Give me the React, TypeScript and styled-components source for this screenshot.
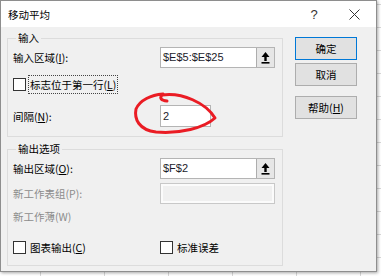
import React from "react";
import styled, { createGlobalStyle } from "styled-components";

const GlobalStyle = createGlobalStyle`
  html, body {
    margin: 0;
    padding: 0;
  }

  body {
    width: 381px;
    height: 276px;
    overflow: hidden;
    background-color: #fff;
    background-image: linear-gradient(#d8d8d8 1px, transparent 1px),
      linear-gradient(90deg, #d8d8d8 1px, transparent 1px);
    background-size: 100% 23px, 64px 100%;
    background-position: 0 4px, 40px 0;
    font-family: "Noto Sans CJK SC", "Microsoft YaHei", sans-serif;
    font-size: 10.5px;
    color: #000;
  }
`;

interface RowProps {
  $mt: number;
  $h: number;
}

interface GroupProps {
  $mt: number;
  $pb: number;
}

const App: React.FC = () => {
  return (
    <>
      <GlobalStyle />
      <Dialog>
        <TitleBar>
          <Title>移动平均</Title>
          <HelpMark>?</HelpMark>
          <CloseBox>
            <svg width="11" height="11" viewBox="0 0 11 11">
              <path d="M0.5 0.5 L10.5 10.5 M10.5 0.5 L0.5 10.5" stroke="#333" strokeWidth="1" fill="none" />
            </svg>
          </CloseBox>
        </TitleBar>

        <Body>
          <LeftCol>
            <GroupBox $mt={0} $pb={9}>
              <Legend>输入</Legend>
              <FieldRow $mt={2} $h={21}>
                <Label>
                  输入区域(<Mn>I</Mn>):
                </Label>
                <RefEdit>
                  <RefValue>$E$5:$E$25</RefValue>
                  <RefButton>
                    <UpArrow />
                  </RefButton>
                </RefEdit>
              </FieldRow>
              <FieldRow $mt={7} $h={19}>
                <CheckRow>
                  <Checkbox />
                  <FocusText>
                    标志位于第一行(<Mn>L</Mn>)
                  </FocusText>
                </CheckRow>
              </FieldRow>
              <FieldRow $mt={11} $h={22}>
                <Label>
                  间隔(<Mn>N</Mn>):
                </Label>
                <NumberBox>2</NumberBox>
              </FieldRow>
            </GroupBox>

            <GroupBox $mt={5} $pb={7}>
              <Legend>输出选项</Legend>
              <FieldRow $mt={2} $h={21}>
                <Label>
                  输出区域(<Mn>O</Mn>):
                </Label>
                <RefEdit>
                  <RefValue>$F$2</RefValue>
                  <RefButton>
                    <UpArrow />
                  </RefButton>
                </RefEdit>
              </FieldRow>
              <FieldRow $mt={4} $h={21}>
                <Label $disabled>新工作表组(P):</Label>
                <DisabledBox />
              </FieldRow>
              <FieldRow $mt={2} $h={21}>
                <Label $disabled>新工作薄(W)</Label>
              </FieldRow>
              <FieldRow $mt={10} $h={21}>
                <CheckRow>
                  <Checkbox />
                  <CheckText>
                    图表输出(<Mn>C</Mn>)
                  </CheckText>
                </CheckRow>
                <CheckRow>
                  <Checkbox />
                  <CheckText>标准误差</CheckText>
                </CheckRow>
              </FieldRow>
            </GroupBox>
          </LeftCol>

          <RightCol>
            <DialogButton $primary $mt={0}>
              确定
            </DialogButton>
            <DialogButton $mt={3}>取消</DialogButton>
            <DialogButton $mt={10}>
              帮助(<Mn>H</Mn>)
            </DialogButton>
          </RightCol>
        </Body>

        <Scribble viewBox="0 0 381 276" width="381" height="276">
          <path
            d="M167 101 Q158 100 162 95 C182 92 206 103 215 118 C204 128 180 134 156 132 C139 130 134 119 136 109 C140 100 151 95 163 94"
            stroke="#ea1c24"
            strokeWidth="3"
            fill="none"
            strokeLinecap="round"
            strokeLinejoin="round"
          />
        </Scribble>
      </Dialog>
    </>
  );
};

const UpArrow: React.FC = () => (
  <svg width="9" height="12" viewBox="0 0 9 12">
    <path d="M4.5 0 L8.5 5 H5.7 V9 H3.3 V5 H0.5 Z" fill="#000" />
    <rect x="0.5" y="10" width="8" height="1.6" fill="#000" />
  </svg>
);

const Dialog = styled.div`
  position: relative;
  width: 377px;
  box-sizing: border-box;
  border: 1px solid #8e8e8e;
  background: #f0f0f0;
  box-shadow: 1px 1px 3px rgba(0, 0, 0, 0.35);
`;

const TitleBar = styled.div`
  height: 26px;
  background: #fff;
  display: flex;
  align-items: center;
  padding-left: 7px;
`;

const Title = styled.span`
  font-size: 10.5px;
  color: #000;
`;

const HelpMark = styled.span`
  margin-left: auto;
  width: 36px;
  text-align: center;
  font-family: "Liberation Sans", sans-serif;
  font-size: 13px;
  color: #333;
`;

const CloseBox = styled.div`
  width: 44px;
  height: 26px;
  display: flex;
  align-items: center;
  justify-content: center;
`;

const Body = styled.div`
  display: flex;
  padding: 4px 0 5px 6px;
`;

const LeftCol = styled.div`
  width: 276px;
  display: flex;
  flex-direction: column;
`;

const RightCol = styled.div`
  margin-left: 12px;
  padding-top: 6px;
  display: flex;
  flex-direction: column;
`;

const GroupBox = styled.fieldset<GroupProps>`
  margin: ${(p) => p.$mt}px 0 0 0;
  padding: 0 7px ${(p) => p.$pb}px 5px;
  border: 1px solid #dcdcdc;
  min-width: 0;
`;

const Legend = styled.legend`
  padding: 0 2px;
  margin-left: 3px;
  line-height: 14px;
  font-size: 10.5px;
`;

const FieldRow = styled.div<RowProps>`
  display: grid;
  grid-template-columns: 1fr 115px;
  align-items: center;
  height: ${(p) => p.$h}px;
  margin-top: ${(p) => p.$mt}px;
`;

const Label = styled.span<{ $disabled?: boolean }>`
  white-space: nowrap;
  color: ${(p) => (p.$disabled ? "#8c8c8c" : "#000")};
`;

const Mn = styled.span`
  text-decoration: underline;
`;

const RefEdit = styled.div`
  display: flex;
  height: 21px;
  box-sizing: border-box;
  border: 1px solid #b4b4b4;
  background: #fff;
`;

const RefValue = styled.span`
  flex: 1;
  padding-left: 2px;
  line-height: 19px;
  font-family: "Liberation Sans", sans-serif;
  font-size: 11px;
  color: #1b1b2b;
`;

const RefButton = styled.div`
  width: 18px;
  box-sizing: border-box;
  border-left: 1px solid #adadad;
  background: #e6e6e6;
  display: flex;
  align-items: center;
  justify-content: center;
`;

const NumberBox = styled.div`
  width: 51px;
  height: 22px;
  box-sizing: border-box;
  border: 1px solid #b4b4b4;
  background: #fff;
  padding-left: 2px;
  line-height: 20px;
  font-family: "Liberation Sans", sans-serif;
  font-size: 11px;
  color: #1b1b2b;
`;

const DisabledBox = styled.div`
  height: 21px;
  box-sizing: border-box;
  border: 1px solid #c8c8c8;
  background: #f0f0f0;
  box-shadow: inset 0 0 0 2px #fbfbfb;
`;

const CheckRow = styled.div`
  display: flex;
  align-items: center;
`;

const Checkbox = styled.span`
  width: 13px;
  height: 13px;
  box-sizing: border-box;
  border: 1px solid #333;
  background: #fff;
  flex-shrink: 0;
`;

const FocusText = styled.span`
  margin-left: 3px;
  padding: 1px 1px;
  line-height: 15px;
  outline: 1px dotted #444;
  white-space: nowrap;
`;

const CheckText = styled.span`
  margin-left: 4px;
  white-space: nowrap;
`;

const DialogButton = styled.div<{ $primary?: boolean; $mt: number }>`
  width: 62px;
  height: 23px;
  margin-top: ${(p) => p.$mt}px;
  box-sizing: border-box;
  border: 1px solid ${(p) => (p.$primary ? "#0078d7" : "#adadad")};
  background: #e1e1e1;
  display: flex;
  align-items: center;
  justify-content: center;
  font-size: 10.5px;
`;

const Scribble = styled.svg`
  position: absolute;
  left: -1px;
  top: -1px;
  pointer-events: none;
`;

export default App;
